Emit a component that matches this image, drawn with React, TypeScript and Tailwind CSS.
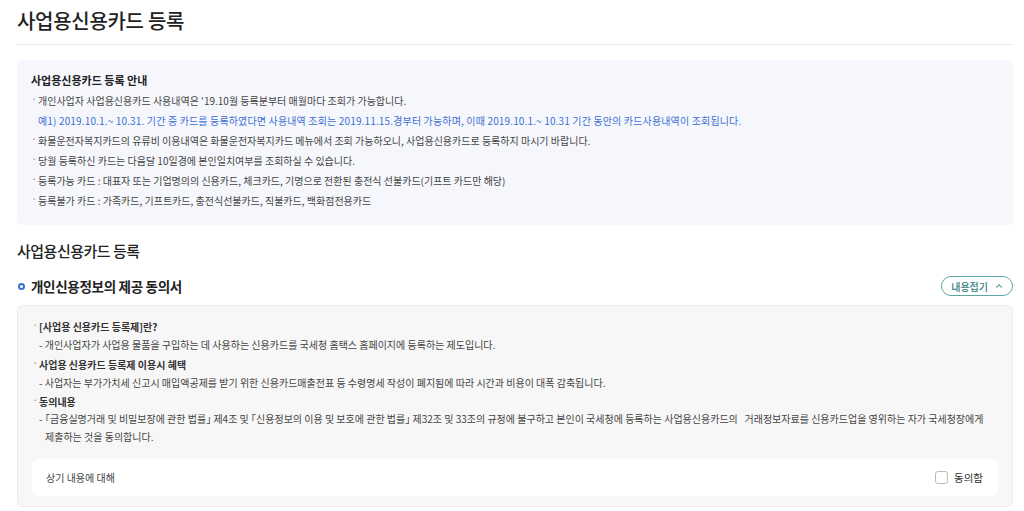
import { ChevronUp } from "lucide-react";

const FONT = "font-['Noto_Sans_CJK_KR','Noto_Sans',sans-serif]";

const guide = [
  "개인사업자 사업용신용카드 사용내역은 '19.10월 등록분부터 매월마다 조회가 가능합니다.",
  "화물운전자복지카드의 유류비 이용내역은 화물운전자복지카드 메뉴에서 조회 가능하오니, 사업용신용카드로 등록하지 마시기 바랍니다.",
  "당월 등록하신 카드는 다음달 10일경에 본인일치여부를 조회하실 수 있습니다.",
  "등록가능 카드 : 대표자 또는 기업명의의 신용카드, 체크카드, 기명으로 전환된 충전식 선불카드(기프트 카드만 해당)",
  "등록불가 카드 : 가족카드, 기프트카드, 충전식선불카드, 직불카드, 백화점전용카드",
];

function Dot() {
  return <span className="w-[7px] shrink-0 -translate-y-[2px] text-[11px] font-normal text-[#999]">·</span>;
}

function Bullet({ children, blue }: { children: React.ReactNode; blue?: string }) {
  return (
    <div>
      <div className="flex h-5 items-center">
        <Dot />
        <span>{children}</span>
      </div>
      {blue && (
        <div className="flex h-5 items-center pl-[7px] tracking-[0.15px] text-[#3c6fd3]">{blue}</div>
      )}
    </div>
  );
}

export default function App() {
  return (
    <div className={`${FONT} min-h-[511px] bg-white pl-[17px] pr-[11px] text-[#333]`}>
      {/* 타이틀 */}
      <h1 className="pt-[6px] text-[20px] leading-[30px] font-medium tracking-[-0.3px] text-[#222]">
        사업용신용카드 등록
      </h1>
      <div className="mt-[8px] h-px bg-[#ececec]" />

      {/* 안내 박스 */}
      <div className="mt-[15px] rounded-md bg-[#f6f7fc] px-[14px] pt-[10px] pb-[15px] text-[10px] text-[#444]">
        <div className="h-5 text-[11px] leading-5 font-bold text-[#222]">사업용신용카드 등록 안내</div>
        <Bullet blue="예1) 2019.10.1.~ 10.31. 기간 중 카드를 등록하였다면 사용내역 조회는 2019.11.15.경부터 가능하며, 이때 2019.10.1.~ 10.31 기간 동안의 카드사용내역이 조회됩니다.">
          {guide[0]}
        </Bullet>
        {guide.slice(1).map((g) => (
          <Bullet key={g}>{g}</Bullet>
        ))}
      </div>

      {/* 섹션 */}
      <h2 className="mt-[14px] text-[15px] leading-6 font-medium tracking-[-0.5px] text-[#222]">
        사업용신용카드 등록
      </h2>

      <div className="mt-[13px] flex h-5 items-center justify-between">
        <div className="flex items-center gap-[6px]">
          <span className="ml-[1px] h-[7px] w-[7px] rounded-full border-[2px] border-[#3b6fd4]" />
          <span className="text-[13.5px] font-bold tracking-[-0.3px] text-[#222]">개인신용정보의 제공 동의서</span>
        </div>
        <button className="flex h-5 items-center gap-[6px] rounded-full border border-[#5aa6a3] pr-[8px] pl-[9px] text-[10px] font-medium text-[#2f8080]">
          내용접기
          <ChevronUp size={10} strokeWidth={2.5} />
        </button>
      </div>

      {/* 동의서 박스 */}
      <div className="mt-[9px] rounded-md border border-[#ececec] bg-[#f7f7f7] px-[14px] pt-[11px] pb-[10px] text-[10px] text-[#444]">
        <div className="flex h-[18px] items-center font-bold text-[#333]">
          <Dot />[사업용 신용카드 등록제]란?
        </div>
        <div className="flex h-[18px] items-center pl-[7px]">
          - 개인사업자가 사업용 물품을 구입하는 데 사용하는 신용카드를 국세청 홈택스 홈페이지에 등록하는 제도입니다.
        </div>
        <div className="mt-[2px] flex h-[18px] items-center font-bold text-[#333]">
          <Dot />사업용 신용카드 등록제 이용시 혜택
        </div>
        <div className="flex h-[18px] items-center pl-[7px]">
          - 사업자는 부가가치세 신고시 매입액공제를 받기 위한 신용카드매출전표 등 수령명세 작성이 폐지됨에 따라 시간과 비용이 대폭 감축됩니다.
        </div>
        <div className="mt-[1px] flex h-[18px] items-center font-bold text-[#333]">
          <Dot />동의내용
        </div>
        <div className="flex pl-[7px] leading-[18px]">
          <span className="w-[6px] shrink-0">-</span>
          <span className="break-keep">
            ｢금융실명거래 및 비밀보장에 관한 법률｣ 제4조 및 ｢신용정보의 이용 및 보호에 관한 법률｣ 제32조 및 33조의 규정에 불구하고 본인이 국세청에 등록하는 사업용신용카드의 &nbsp; 거래정보자료를 신용카드업을 영위하는 자가 국세청장에게 제출하는 것을 동의합니다.
          </span>
        </div>

        <div className="mt-[13px] flex h-[37px] items-center justify-between rounded-md bg-white pr-[15px] pl-[14px]">
          <span className="text-[#444]">상기 내용에 대해</span>
          <label className="flex items-center gap-[6px]">
            <span className="h-[13px] w-[13px] rounded-[3px] border border-[#bbb] bg-white" />
            <span className="text-[10.5px] text-[#333]">동의함</span>
          </label>
        </div>
      </div>
    </div>
  );
}
